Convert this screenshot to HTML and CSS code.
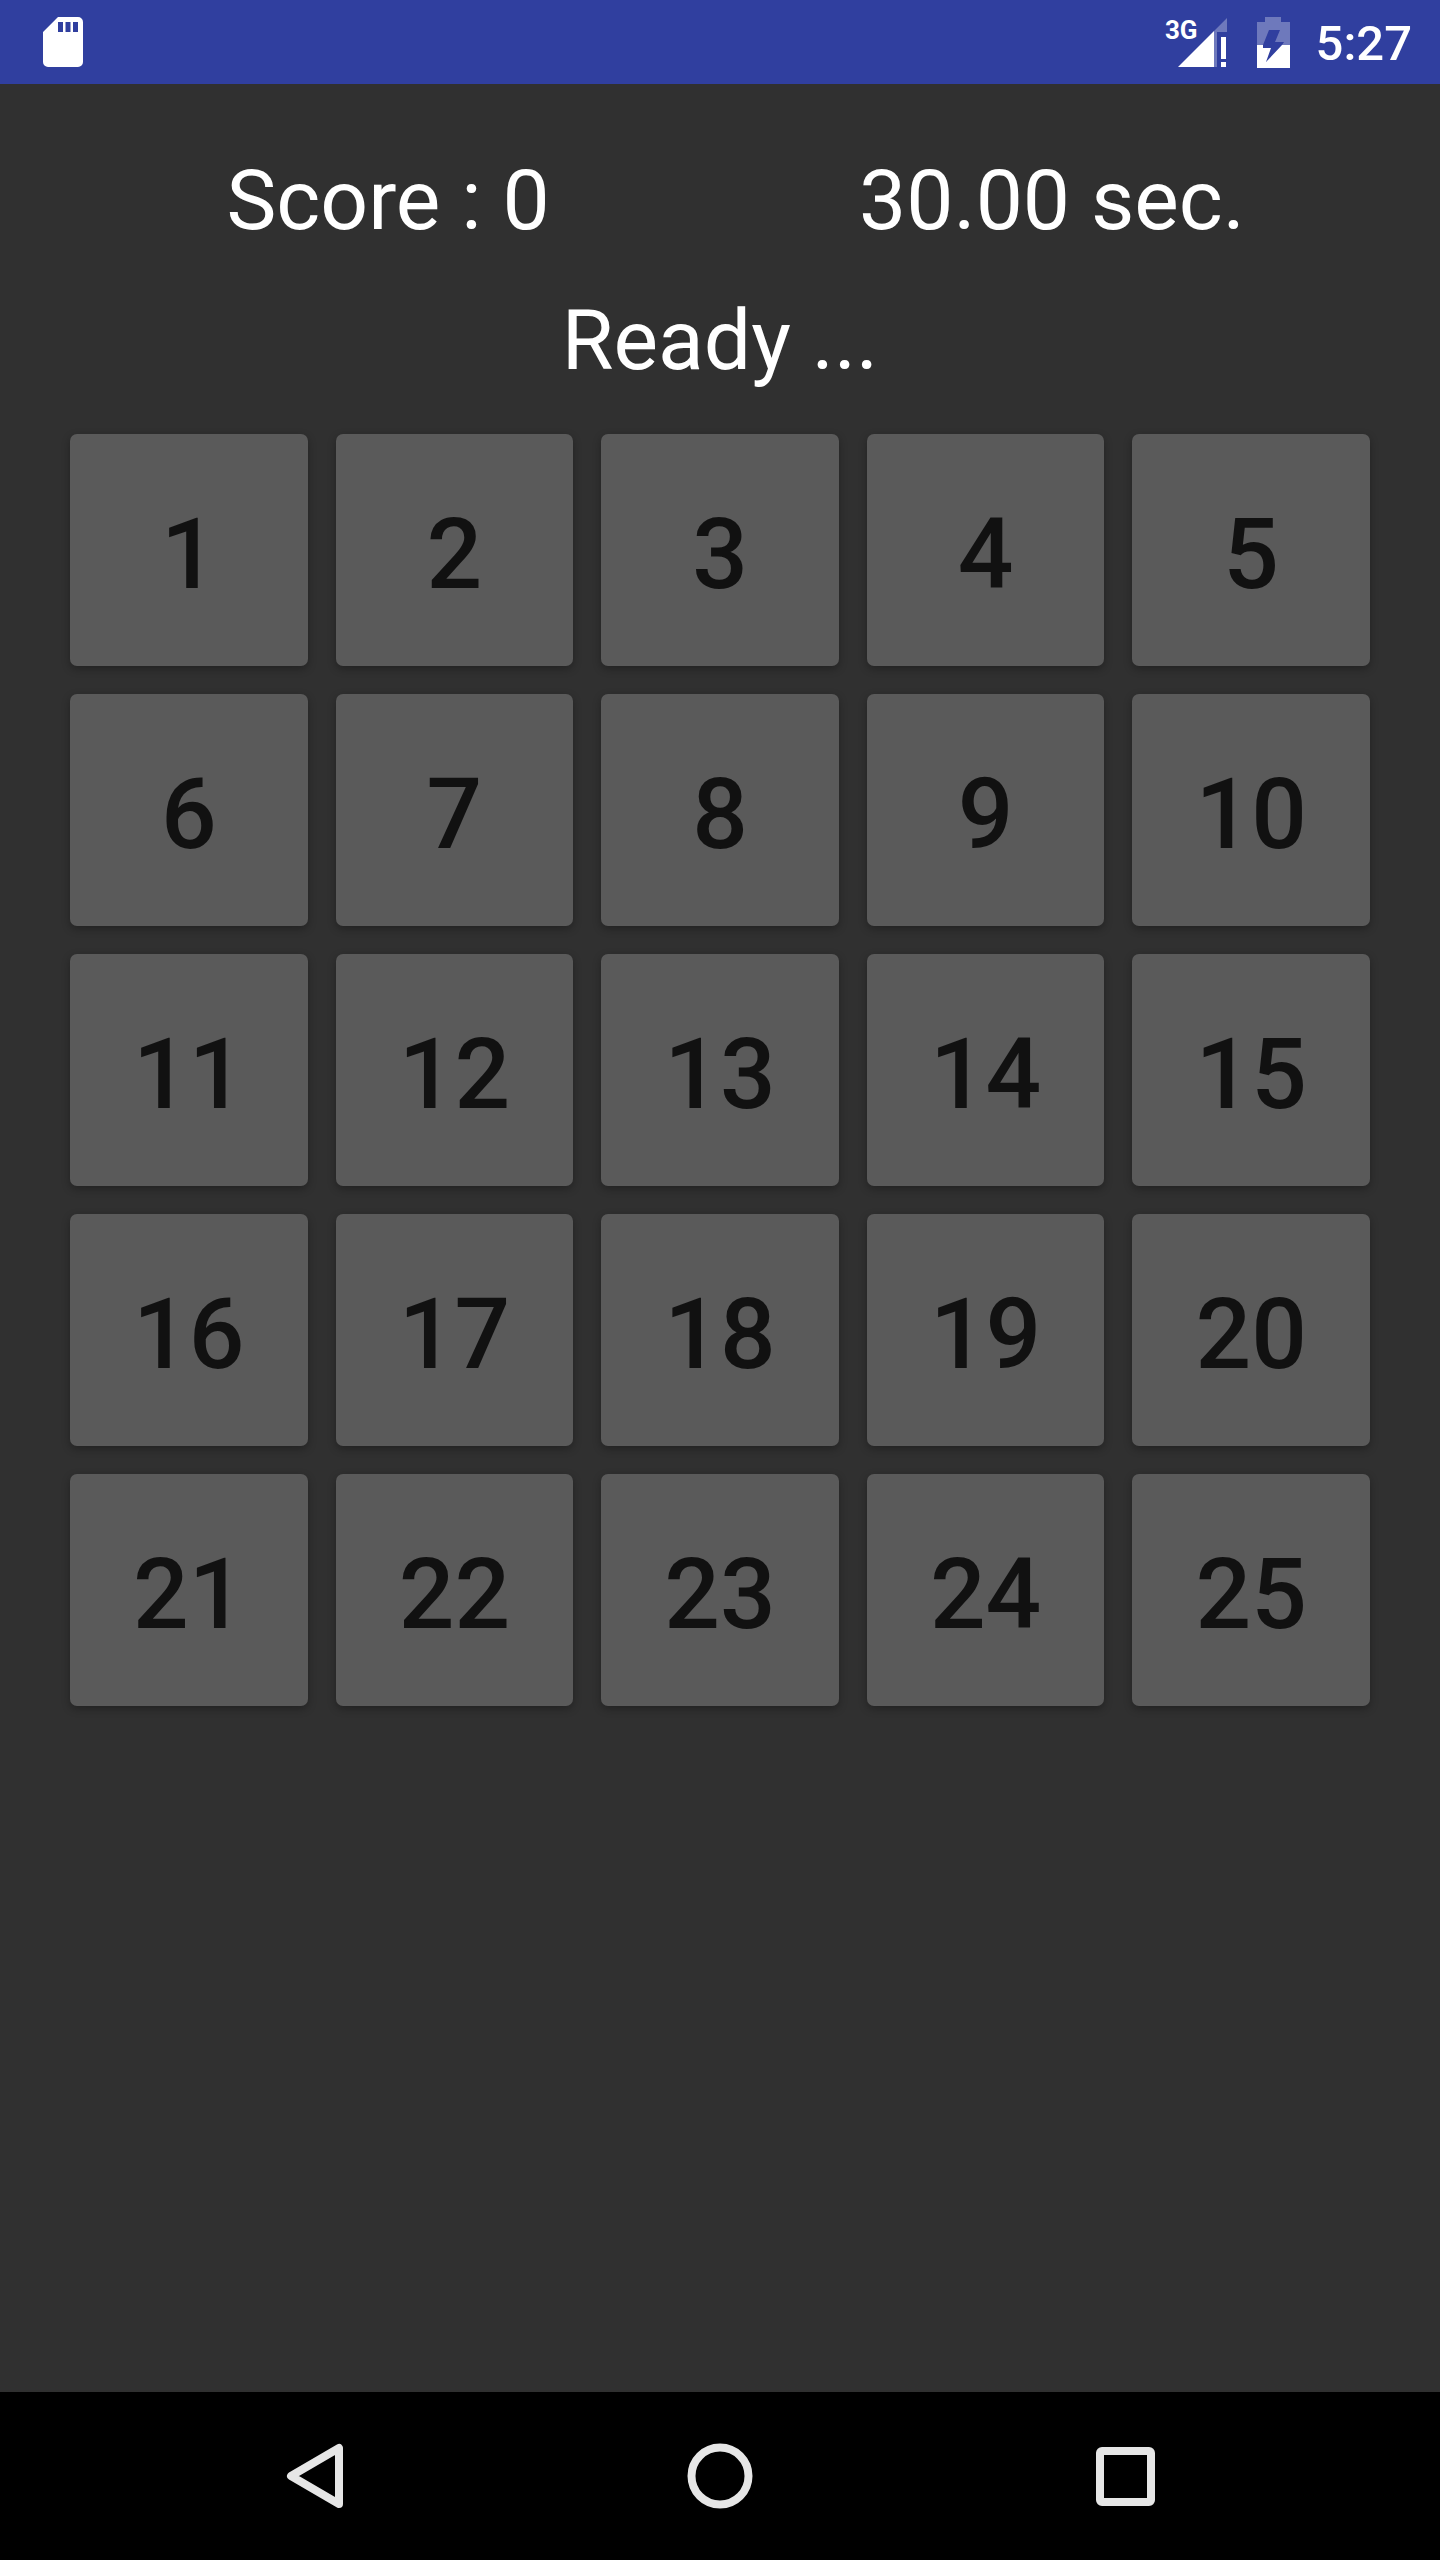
FILE: index.html
```html
<!DOCTYPE html>
<html lang="en">
<head>
    <meta charset="UTF-8">
    <meta name="viewport" content="width=device-width, initial-scale=1.0">
    <title>Number Game</title>
    <link rel="stylesheet" href="styles.css">
</head>
<body>
    <header class="status-bar">
        <svg class="sd-card" viewBox="0 0 40 50" aria-hidden="true">
            <path fill="#fff" fill-rule="evenodd" d="M15 0h20a5 5 0 0 1 5 5v40a5 5 0 0 1-5 5H5a5 5 0 0 1-5-5V15zM15 5v10h5V5zM22.500 5v10h5V5zM30 5v10h5V5z"/>
        </svg>
        <div class="status-icons">
            <div class="signal">
                <svg viewBox="0 0 49 49" aria-hidden="true">
                    <path fill="#fff" fill-opacity=".3" d="M36 13L49 0v14H39v35h-3z"/>
                    <path fill="#fff" d="M0 49L36 13v36zM43 19h5v22h-5zM43 44h5v5h-5z"/>
                </svg>
                <span class="network">3G</span>
            </div>
            <svg class="battery" viewBox="0 0 33 51" aria-hidden="true">
                <path fill="#fff" fill-opacity=".3" d="M8 0h16v5h9v23h-8l2-3H18l5-12H12L6 28H0V5h8z"/>
                <path fill="#fff" d="M0 28h6v3h8L9 45 25 28h8v23H0z"/>
            </svg>
            <span class="clock">5:27</span>
        </div>
    </header>

    <main class="game">
        <div class="info">
            <span>Score : 0</span>
            <span>30.00 sec.</span>
        </div>
        <div class="message">Ready ...</div>
        <div class="board">
            <button>1</button>
            <button>2</button>
            <button>3</button>
            <button>4</button>
            <button>5</button>
            <button>6</button>
            <button>7</button>
            <button>8</button>
            <button>9</button>
            <button>10</button>
            <button>11</button>
            <button>12</button>
            <button>13</button>
            <button>14</button>
            <button>15</button>
            <button>16</button>
            <button>17</button>
            <button>18</button>
            <button>19</button>
            <button>20</button>
            <button>21</button>
            <button>22</button>
            <button>23</button>
            <button>24</button>
            <button>25</button>
        </div>
    </main>

    <nav class="nav-bar">
        <button aria-label="Back">
            <svg viewBox="0 0 66 66"><path d="M9 33L57 5v56z"/></svg>
        </button>
        <button aria-label="Home">
            <svg viewBox="0 0 66 66"><circle cx="33" cy="33" r="28.500"/></svg>
        </button>
        <button aria-label="Recent apps">
            <svg viewBox="0 0 66 66"><rect x="8" y="8" width="51" height="51" rx="2"/></svg>
        </button>
    </nav>
</body>
</html>
```
FILE: styles.css
```css
* {
    box-sizing: border-box;
}
body {
    margin: 0;
    min-height: 100vh;
    display: flex;
    flex-direction: column;
    background-color: #303030;
    color: #fff;
    font-family: Roboto, sans-serif;
}
button {
    border: none;
    font-family: inherit;
    cursor: pointer;
}

/* status bar */
.status-bar {
    display: flex;
    justify-content: space-between;
    align-items: center;
    height: 84px;
    padding: 0 28px 0 43px;
    background-color: #303f9f;
}
.sd-card {
    width: 40px;
    height: 50px;
}
.status-icons {
    display: flex;
    align-items: center;
}
.signal {
    position: relative;
    height: 49px;
    margin-right: 30px;
}
.signal svg {
    display: block;
    width: 49px;
    height: 49px;
}
.network {
    position: absolute;
    top: -3px;
    right: 29px;
    font-size: 26px;
    line-height: 30px;
    font-weight: 700;
}
.battery {
    width: 33px;
    height: 51px;
    margin-right: 26px;
}
.clock {
    padding-top: 4px;
    font-size: 49px;
    line-height: 60px;
    font-weight: 500;
}

/* game */
.game {
    flex: 1;
    padding: 47px 56px;
}
.info {
    display: grid;
    grid-template-columns: 1fr 1fr;
}
.info,
.message {
    font-size: 84px;
    line-height: 140px;
    text-align: center;
}
.board {
    display: grid;
    grid-template-columns: repeat(5, 1fr);
    gap: 28px;
    padding: 23px 14px;
}
.board button {
    height: 232px;
    padding: 8px 0 0;
    border-radius: 7px;
    background-color: #5a5a5a;
    box-shadow: 0 3px 8px rgba(0, 0, 0, 0.3);
    color: #111;
    font-size: 98px;
    font-weight: 500;
}

/* navigation bar */
.nav-bar {
    display: grid;
    grid-template-columns: repeat(3, 1fr);
    height: 168px;
    padding: 0 112px;
    background-color: #000;
}
.nav-bar button {
    display: flex;
    justify-content: center;
    align-items: center;
    background: none;
}
.nav-bar svg {
    width: 66px;
    height: 66px;
    fill: none;
    stroke: #e6e6e6;
    stroke-width: 8;
    stroke-linejoin: round;
}
```
